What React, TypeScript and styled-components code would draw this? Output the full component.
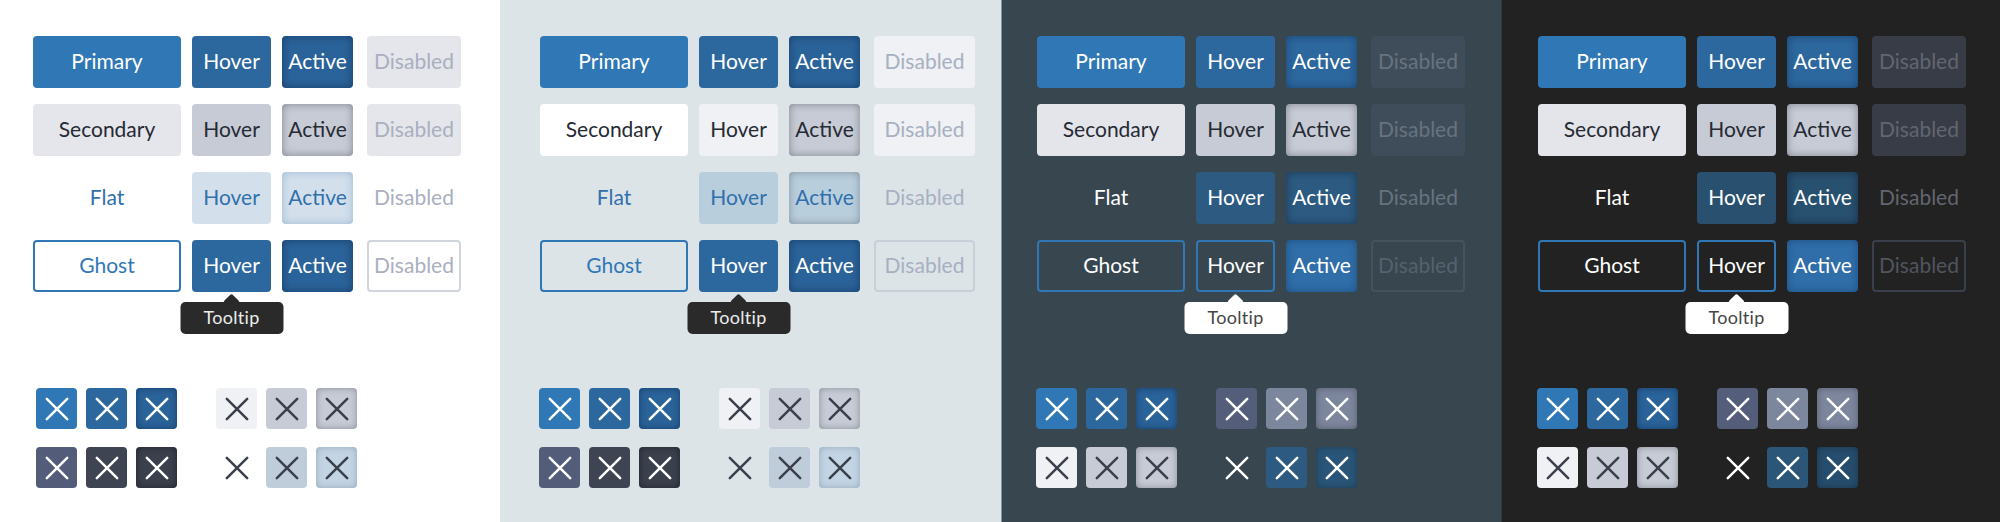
import React from "react";
import styled, { createGlobalStyle } from "styled-components";

const Global = createGlobalStyle`
  html, body { margin: 0; padding: 0; }
  body { font-family: Lato, "Noto Sans", sans-serif; }
`;

type BtnLook = { bg: string; fg: string; border?: string; inset?: string };
type IconLook = { bg: string; stroke: string; inset?: string };

type PanelSpec = {
  bg: string;
  width: number;
  pad: number;
  edge?: string;
  iconShift: number;
  disabledWidth: number;
  tipDark: boolean;
  rows: { label: string; looks: [BtnLook, BtnLook, BtnLook, BtnLook] }[];
  icons: [IconLook[], IconLook[]];
};

const Page = styled.div`
  display: flex;
  width: 2000px;
  height: 522px;
  overflow: hidden;
`;

const Panel = styled.section<{ $bg: string; $w: number; $pad: number; $edge?: string }>`
  flex: none;
  box-sizing: border-box;
  width: ${(p) => p.$w}px;
  height: 522px;
  background: ${(p) => p.$bg};
  padding: 36px 0 0 ${(p) => p.$pad}px;
  border-left: ${(p) => (p.$edge ? `1px solid ${p.$edge}` : "none")};
  display: flex;
  flex-direction: column;
`;

const ButtonGrid = styled.div`
  display: flex;
  flex-direction: column;
  gap: 16px;
`;

const ButtonRow = styled.div`
  display: flex;
  align-items: center;
  gap: 11px;
`;

const Btn = styled.div<{ $w: number; $look: BtnLook; $ml?: number }>`
  box-sizing: border-box;
  width: ${(p) => p.$w}px;
  height: 52px;
  padding-bottom: 3px;
  margin-left: ${(p) => p.$ml ?? 0}px;
  border-radius: 4px;
  display: flex;
  align-items: center;
  justify-content: center;
  font-size: 21px;
  font-weight: 400;
  white-space: nowrap;
  background: ${(p) => p.$look.bg};
  color: ${(p) => p.$look.fg};
  border: ${(p) => (p.$look.border ? `2px solid ${p.$look.border}` : "none")};
  box-shadow: ${(p) => (p.$look.inset ? `inset 0 0 8px ${p.$look.inset}` : "none")};
`;

const TipAnchor = styled.div`
  position: relative;
  display: flex;
`;

const Tooltip = styled.div<{ $dark: boolean }>`
  position: absolute;
  top: calc(100% + 10px);
  left: 50%;
  transform: translateX(-50%);
  width: 103px;
  height: 32px;
  border-radius: 5px;
  background: ${(p) => (p.$dark ? "#2a2a2a" : "#ffffff")};
  color: ${(p) => (p.$dark ? "#ececec" : "#454545")};
  font-size: 18px;
  line-height: 31px;
  text-align: center;
  letter-spacing: 0.3px;
  z-index: 2;
  &::before {
    content: "";
    position: absolute;
    top: -6px;
    left: 50%;
    width: 12px;
    height: 12px;
    margin-left: -6px;
    border-radius: 2px;
    background: inherit;
    transform: rotate(45deg);
  }
`;

const IconArea = styled.div<{ $shift: number }>`
  display: flex;
  gap: 39px;
  margin-top: 96px;
  margin-left: ${(p) => p.$shift}px;
`;

const IconGroup = styled.div`
  display: grid;
  grid-template-columns: repeat(3, 41px);
  grid-auto-rows: 41px;
  column-gap: 9px;
  row-gap: 18px;
`;

const IconBtn = styled.div<{ $look: IconLook }>`
  width: 41px;
  height: 41px;
  border-radius: 4px;
  display: flex;
  align-items: center;
  justify-content: center;
  background: ${(p) => p.$look.bg};
  box-shadow: ${(p) => (p.$look.inset ? `inset 0 0 7px ${p.$look.inset}` : "none")};
`;

const XIcon = ({ color }: { color: string }) => (
  <svg width="24" height="24" viewBox="0 0 24 24" fill="none">
    <path d="M1.8 1.8 L22.2 22.2 M22.2 1.8 L1.8 22.2" stroke={color} strokeWidth="2.5" strokeLinecap="round" />
  </svg>
);

const W = "#ffffff";
const DK = "#3a3f4c";
const blue = "#3077b5";
const blueHover = "#2c689e";
const blueActive = "#2a6399";

const lightIcons = (row2Active: string): [IconLook[], IconLook[]] => [
  [
    { bg: blue, stroke: W },
    { bg: blueHover, stroke: W },
    { bg: blueActive, stroke: W, inset: "rgba(0,20,50,0.45)" },
    { bg: "#535d7a", stroke: W },
    { bg: "#3f4452", stroke: W },
    { bg: "#3b404d", stroke: W, inset: "rgba(0,0,0,0.45)" },
  ],
  [
    { bg: "#f0f1f4", stroke: DK },
    { bg: "#c6cbd6", stroke: DK },
    { bg: "#c6cbd6", stroke: DK, inset: "rgba(0,0,0,0.3)" },
    { bg: "transparent", stroke: DK },
    { bg: "#bfcddb", stroke: DK },
    { bg: row2Active, stroke: DK, inset: "rgba(60,90,120,0.35)" },
  ],
];

const darkIcons = (h: string, a: string): [IconLook[], IconLook[]] => [
  [
    { bg: blue, stroke: W },
    { bg: blueHover, stroke: W },
    { bg: blueActive, stroke: W, inset: "rgba(0,20,50,0.45)" },
    { bg: "#f0f1f4", stroke: DK },
    { bg: "#c6cbd6", stroke: DK },
    { bg: "#c6cbd6", stroke: DK, inset: "rgba(0,0,0,0.3)" },
  ],
  [
    { bg: "#545e7b", stroke: W },
    { bg: "#7c869d", stroke: W },
    { bg: "#7c869d", stroke: W, inset: "rgba(0,0,0,0.3)" },
    { bg: "transparent", stroke: W },
    { bg: h, stroke: W },
    { bg: a, stroke: W, inset: "rgba(0,0,0,0.3)" },
  ],
];

const activeBlue: BtnLook = { bg: blueActive, fg: W, inset: "rgba(0,20,50,0.45)" };
const secText = "#262a33";

const panels: PanelSpec[] = [
  {
    bg: "#ffffff",
    width: 500,
    pad: 33,
    iconShift: 3,
    disabledWidth: 94,
    tipDark: true,
    rows: [
      { label: "Primary", looks: [{ bg: blue, fg: W }, { bg: blueHover, fg: W }, activeBlue, { bg: "#e4e6eb", fg: "#a9afbf" }] },
      { label: "Secondary", looks: [{ bg: "#e4e6eb", fg: secText }, { bg: "#c6cbd6", fg: secText }, { bg: "#c6cbd6", fg: secText, inset: "rgba(0,0,0,0.35)" }, { bg: "#e4e6eb", fg: "#a9afbf" }] },
      { label: "Flat", looks: [{ bg: "transparent", fg: "#3070ab" }, { bg: "#d3e0ec", fg: "#3070ab" }, { bg: "#d3e0ec", fg: "#3070ab", inset: "rgba(60,110,160,0.35)" }, { bg: "transparent", fg: "#a9afbf" }] },
      { label: "Ghost", looks: [{ bg: W, fg: blue, border: blue }, { bg: blueHover, fg: W }, activeBlue, { bg: W, fg: "#a9afbf", border: "#d0d4dd" }] },
    ],
    icons: lightIcons("#c3d5e4"),
  },
  {
    bg: "#dde4e8",
    width: 501,
    pad: 40,
    iconShift: -1,
    disabledWidth: 101,
    tipDark: true,
    rows: [
      { label: "Primary", looks: [{ bg: blue, fg: W }, { bg: blueHover, fg: W }, activeBlue, { bg: "#eff1f4", fg: "#a7b0c1" }] },
      { label: "Secondary", looks: [{ bg: W, fg: secText }, { bg: "#eff1f4", fg: secText }, { bg: "#c6cbd6", fg: secText, inset: "rgba(0,0,0,0.35)" }, { bg: "#eff1f4", fg: "#a7b0c1" }] },
      { label: "Flat", looks: [{ bg: "transparent", fg: "#3070ab" }, { bg: "#b9cedd", fg: "#3070ab" }, { bg: "#b9cedd", fg: "#3070ab", inset: "rgba(0,0,0,0.3)" }, { bg: "transparent", fg: "#a7b0c1" }] },
      { label: "Ghost", looks: [{ bg: "transparent", fg: blue, border: blue }, { bg: blueHover, fg: W }, activeBlue, { bg: "transparent", fg: "#a7b0c1", border: "#c9cfd9" }] },
    ],
    icons: lightIcons("#c3d5e4"),
  },
  {
    bg: "#37464f",
    width: 500,
    pad: 35,
    edge: "#8594a0",
    iconShift: -1,
    disabledWidth: 94,
    tipDark: false,
    rows: [
      { label: "Primary", looks: [{ bg: blue, fg: W }, { bg: blueHover, fg: W }, { bg: "#2c679d", fg: W, inset: "rgba(0,20,50,0.4)" }, { bg: "#3f4d5a", fg: "#67737f" }] },
      { label: "Secondary", looks: [{ bg: "#e3e5ea", fg: secText }, { bg: "#c6cbd6", fg: secText }, { bg: "#c6cbd6", fg: secText, inset: "rgba(0,0,0,0.35)" }, { bg: "#3f4d5a", fg: "#67737f" }] },
      { label: "Flat", looks: [{ bg: "transparent", fg: W }, { bg: "#2c5a80", fg: W }, { bg: "#2c5a80", fg: W, inset: "rgba(0,10,30,0.4)" }, { bg: "transparent", fg: "#67737f" }] },
      { label: "Ghost", looks: [{ bg: "transparent", fg: W, border: blue }, { bg: "transparent", fg: W, border: blue }, { bg: "#2f6ea9", fg: W, inset: "rgba(0,20,50,0.35)" }, { bg: "transparent", fg: "#55626d", border: "#45535f" }] },
    ],
    icons: darkIcons("#2c5a80", "#2a5578"),
  },
  {
    bg: "#222222",
    width: 499,
    pad: 36,
    edge: "#2c3a45",
    iconShift: -1,
    disabledWidth: 94,
    tipDark: false,
    rows: [
      { label: "Primary", looks: [{ bg: blue, fg: W }, { bg: blueHover, fg: W }, { bg: "#2c679d", fg: W, inset: "rgba(0,20,50,0.4)" }, { bg: "#383c46", fg: "#62666f" }] },
      { label: "Secondary", looks: [{ bg: "#e3e5ea", fg: secText }, { bg: "#c6cbd6", fg: secText }, { bg: "#c6cbd6", fg: secText, inset: "rgba(0,0,0,0.35)" }, { bg: "#383c46", fg: "#62666f" }] },
      { label: "Flat", looks: [{ bg: "transparent", fg: W }, { bg: "#29506f", fg: W }, { bg: "#28506f", fg: W, inset: "rgba(0,10,30,0.45)" }, { bg: "transparent", fg: "#62666f" }] },
      { label: "Ghost", looks: [{ bg: "transparent", fg: W, border: blue }, { bg: "transparent", fg: W, border: blue }, { bg: "#2f6ea9", fg: W, inset: "rgba(0,20,50,0.35)" }, { bg: "transparent", fg: "#50555e", border: "#3a404b" }] },
    ],
    icons: darkIcons("#2b5677", "#264d6d"),
  },
];

const ButtonPanel = ({ spec }: { spec: PanelSpec }) => (
  <Panel $bg={spec.bg} $w={spec.width} $pad={spec.pad} $edge={spec.edge}>
    <ButtonGrid>
      {spec.rows.map((row, ri) => {
        const isGhost = ri === 3;
        const hover = (
          <Btn $w={79} $look={row.looks[1]}>
            Hover
          </Btn>
        );
        return (
          <ButtonRow key={row.label}>
            <Btn $w={148} $look={row.looks[0]}>
              {row.label}
            </Btn>
            {isGhost ? (
              <TipAnchor>
                {hover}
                <Tooltip $dark={spec.tipDark}>Tooltip</Tooltip>
              </TipAnchor>
            ) : (
              hover
            )}
            <Btn $w={71} $look={row.looks[2]}>
              Active
            </Btn>
            <Btn $w={spec.disabledWidth} $ml={3} $look={row.looks[3]}>
              Disabled
            </Btn>
          </ButtonRow>
        );
      })}
    </ButtonGrid>
    <IconArea $shift={spec.iconShift}>
      {spec.icons.map((group, gi) => (
        <IconGroup key={gi}>
          {group.map((look, ii) => (
            <IconBtn key={ii} $look={look}>
              <XIcon color={look.stroke} />
            </IconBtn>
          ))}
        </IconGroup>
      ))}
    </IconArea>
  </Panel>
);

export default function App() {
  return (
    <>
      <Global />
      <Page>
        {panels.map((p, i) => (
          <ButtonPanel key={i} spec={p} />
        ))}
      </Page>
    </>
  );
}
